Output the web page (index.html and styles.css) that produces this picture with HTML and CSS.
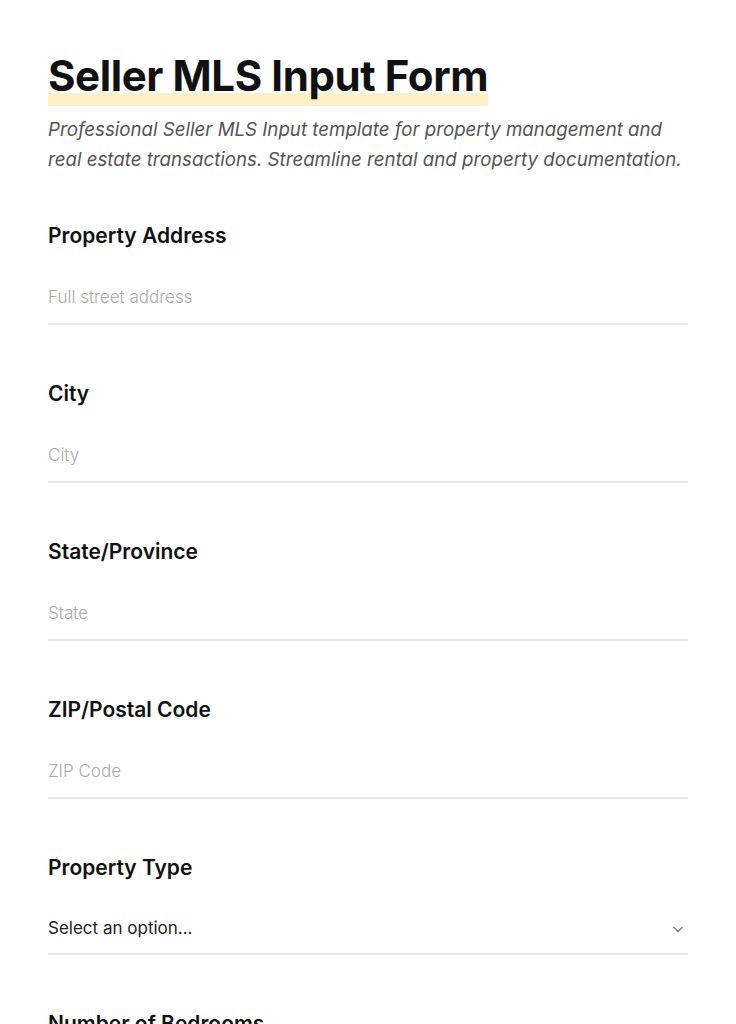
FILE: index.html
```html
<!DOCTYPE html>
<html>
<head>
  <meta charset="UTF-8">
  <title>Seller MLS Input Form</title>
  <link rel="stylesheet" href="styles.css">
</head>
<body>
<div class="container">
  <div class="form-header">
    <h1><span class="mark">Seller MLS Input Form</span></h1>
    <p class="subtitle">Professional Seller MLS Input template for property management and real estate transactions. Streamline rental and property documentation.</p>
  </div>
  <form class="form">
    <div class="field">
      <label for="address">Property Address</label>
      <input type="text" id="address" placeholder="Full street address">
    </div>
    <div class="field">
      <label for="city">City</label>
      <input type="text" id="city" placeholder="City">
    </div>
    <div class="field">
      <label for="state">State/Province</label>
      <input type="text" id="state" placeholder="State">
    </div>
    <div class="field">
      <label for="zip">ZIP/Postal Code</label>
      <input type="text" id="zip" placeholder="ZIP Code">
    </div>
    <div class="field">
      <label for="type">Property Type</label>
      <div class="select-wrap">
        <select id="type">
          <option>Select an option...</option>
          <option>Single Family</option>
          <option>Condo</option>
          <option>Townhouse</option>
          <option>Multi-Family</option>
        </select>
        <svg class="chevron" width="14" height="14" viewBox="0 0 14 14"><path d="M2.5 5l4.5 4.5L11.5 5" fill="none" stroke="#777" stroke-width="1.3"/></svg>
      </div>
    </div>
    <div class="field">
      <label for="bedrooms">Number of Bedrooms</label>
      <input type="number" id="bedrooms" placeholder="0">
    </div>
    <div class="field">
      <label for="bathrooms">Number of Bathrooms</label>
      <input type="number" id="bathrooms" placeholder="0">
    </div>
  </form>
</div>
</body>
</html>
```

FILE: styles.css
```css
* {
  box-sizing: border-box;
}
body {
  margin: 0;
  background: #fff;
  color: #111;
  font-family: Inter, "Noto Sans", sans-serif;
}
.container {
  padding: 48px 48px;
}
.form-header h1 {
  margin: 0;
  font-size: 42px;
  font-weight: 700;
  letter-spacing: -0.4px;
  line-height: 56px;
}
.form-header .mark {
  padding-bottom: 5px;
  background: linear-gradient(transparent 76%, #fdf0c8 76%);
}
.subtitle {
  margin: 11px 0 0;
  font-size: 18.7px;
  font-style: italic;
  line-height: 30px;
  color: #555;
}
.form {
  margin-top: 47px;
}
.field {
  margin-bottom: 55px;
}
.field label {
  display: block;
  font-size: 21px;
  font-weight: 600;
  line-height: 28px;
  margin-bottom: 21px;
}
.field input,
.field select {
  display: block;
  width: 100%;
  border: 0;
  border-bottom: 2px solid #e6e6e6;
  padding: 13px 0;
  font-family: inherit;
  font-size: 17px;
  line-height: 26px;
  color: #222;
  background: transparent;
  outline: none;
  border-radius: 0;
}
.field input::placeholder {
  color: #aaa;
  font-weight: 300;
}
.select-wrap {
  position: relative;
}
.field select {
  appearance: none;
  -webkit-appearance: none;
  height: 52px;
  padding: 12px 0;
  font-weight: 400;
}
.chevron {
  position: absolute;
  right: 3px;
  top: 19px;
  pointer-events: none;
}
```
